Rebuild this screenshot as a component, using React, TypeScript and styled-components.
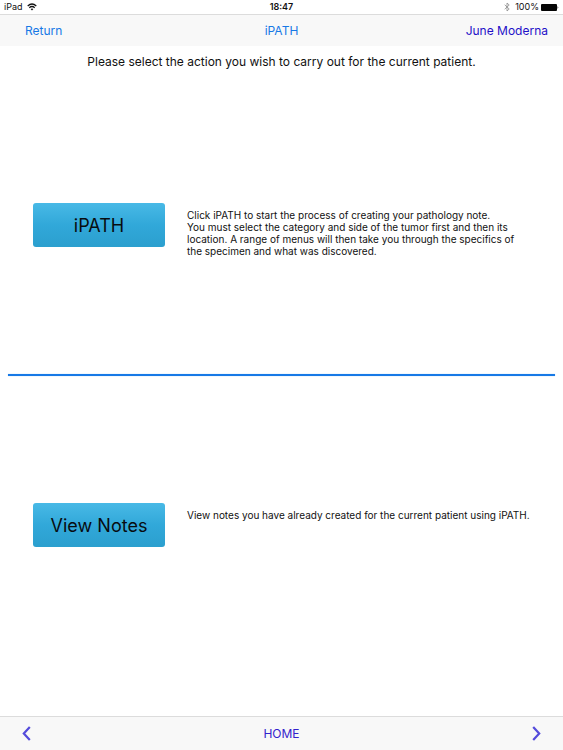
import React from "react";
import styled, { createGlobalStyle } from "styled-components";

const GlobalStyle = createGlobalStyle`
  * { box-sizing: border-box; }
  body {
    margin: 0;
    background: #fff;
    color: #111;
    font-family: Inter, "Liberation Sans", sans-serif;
  }
`;

const Page = styled.div`
  min-height: 100vh;
  display: flex;
  flex-direction: column;
`;

const StatusBar = styled.div`
  display: grid;
  grid-template-columns: 1fr auto 1fr;
  align-items: center;
  height: 15px;
  padding: 0 4px;
  border-bottom: 1px solid #dcdcdc;
  font-size: 9px;
  line-height: 14px;
`;

const StatusGroup = styled.div<{ $end?: boolean }>`
  display: flex;
  align-items: center;
  justify-content: ${(p) => (p.$end ? "flex-end" : "flex-start")};
  gap: ${(p) => (p.$end ? 2 : 4)}px;
`;

const Clock = styled.time`
  font-weight: 600;
`;

const Bluetooth = styled.svg`
  margin-right: 3px;
`;

const NavBar = styled.header`
  display: grid;
  grid-template-columns: 1fr auto 1fr;
  align-items: center;
  height: 31px;
  padding: 0 15px;
  background: #f8f8f8;
`;

const NavLink = styled.a<{ $deep?: boolean; $end?: boolean }>`
  justify-self: ${(p) => (p.$end ? "end" : "start")};
  padding-left: 10px;
  color: ${(p) => (p.$deep ? "#1f10c8" : "#1779e6")};
  font-size: 12px;
  line-height: 16px;
  text-decoration: none;
`;

const NavTitle = styled.h1`
  margin: 0;
  color: #1779e6;
  font-size: 12px;
  font-weight: 400;
  line-height: 16px;
`;

const Main = styled.main`
  flex: 1;
`;

const Prompt = styled.p`
  margin: 0;
  padding: 8px 16px 6px;
  font-size: 12px;
  line-height: 16px;
  text-align: center;
`;

const ActionSection = styled.section`
  display: grid;
  grid-template-columns: 132px minmax(0, 344px);
  align-items: start;
  column-gap: 22px;
  padding: 127px 32px 117px 33px;
`;

const ActionButton = styled.button`
  height: 44px;
  padding: 0;
  border: 0;
  border-radius: 3px;
  background: linear-gradient(#48b9e6, #31a8d9 50%, #2b9fce);
  color: #080c10;
  font-family: inherit;
  font-size: 18px;
  cursor: pointer;
`;

const Description = styled.p`
  margin: 0;
  padding-top: 6px;
  font-size: 10px;
  line-height: 12px;
`;

const Divider = styled.hr`
  height: 2px;
  margin: 0 8px;
  border: 0;
  background: #1779e6;
  box-shadow: 0 0 1px #6db4f5;
`;

const BottomBar = styled.nav`
  display: flex;
  align-items: center;
  justify-content: space-between;
  height: 34px;
  padding: 0 18px;
  border-top: 1px solid #dcdcdc;
  background: #f8f8f8;
`;

const BarButton = styled.button`
  display: flex;
  align-items: center;
  justify-content: center;
  height: 24px;
  padding: 0 4px;
  border: 0;
  background: none;
  color: #3322cc;
  font-family: inherit;
  font-size: 12px;
  line-height: 16px;
  cursor: pointer;
`;

const Chevron = ({ right }: { right?: boolean }) => (
  <svg width="10" height="16" viewBox="0 0 10 16" fill="none" aria-hidden="true">
    <path
      d={right ? "M2.2 1 8.2 7.5 2.2 14" : "M7.8 1 1.8 7.5 7.8 14"}
      stroke="#544bdb"
      strokeWidth="2.2"
    />
  </svg>
);

const actions = [
  {
    label: "iPATH",
    lines: [
      "Click iPATH to start the process of creating your pathology note.",
      "You must select the category and side of the tumor first and then its location. A range of menus will then take you through the specifics of the specimen and what was discovered.",
    ],
  },
  {
    label: "View Notes",
    lines: ["View notes you have already created for the current patient using iPATH."],
  },
];

export default function App() {
  return (
    <Page>
      <GlobalStyle />
      <StatusBar>
        <StatusGroup>
          <span>iPad</span>
          <svg width="10" height="8" viewBox="0 0 10 8" fill="none" stroke="#111" role="img" aria-label="Wi-Fi">
            <path d="M.7 3Q5-1 9.3 3M2.3 4.7q2.7-2.4 5.4 0" strokeWidth="1.2" />
            <path d="M3.6 5.9q1.4-1 2.8 0L5 7.5Z" fill="#111" stroke="none" />
          </svg>
        </StatusGroup>
        <Clock>18:47</Clock>
        <StatusGroup $end>
          <Bluetooth width="6" height="10" viewBox="0 0 6 10" fill="none" stroke="#8c8c8c" strokeWidth=".8" role="img" aria-label="Bluetooth">
            <path d="M.7 2.8 5.2 7 3 9V1l2.2 2L.7 7.2" />
          </Bluetooth>
          <span>100%</span>
          <svg width="18" height="7" viewBox="0 0 18 7" role="img" aria-label="Battery full">
            <rect width="16" height="7" rx="1" fill="#050505" />
            <path d="M16.6 2q1.4 1.5 0 3Z" fill="#050505" />
          </svg>
        </StatusGroup>
      </StatusBar>
      <NavBar>
        <NavLink href="#return">Return</NavLink>
        <NavTitle>iPATH</NavTitle>
        <NavLink href="#patient" $deep $end>June Moderna</NavLink>
      </NavBar>
      <Main>
        <Prompt>Please select the action you wish to carry out for the current patient.</Prompt>
        {actions.map((action, i) => (
          <React.Fragment key={action.label}>
            {i > 0 && <Divider />}
            <ActionSection>
              <ActionButton type="button">{action.label}</ActionButton>
              <Description>
                {action.lines.map((line, n) => (
                  <React.Fragment key={line}>
                    {n > 0 && <br />}
                    {line}
                  </React.Fragment>
                ))}
              </Description>
            </ActionSection>
          </React.Fragment>
        ))}
      </Main>
      <BottomBar>
        <BarButton type="button" aria-label="Previous"><Chevron /></BarButton>
        <BarButton type="button">HOME</BarButton>
        <BarButton type="button" aria-label="Next"><Chevron right /></BarButton>
      </BottomBar>
    </Page>
  );
}
